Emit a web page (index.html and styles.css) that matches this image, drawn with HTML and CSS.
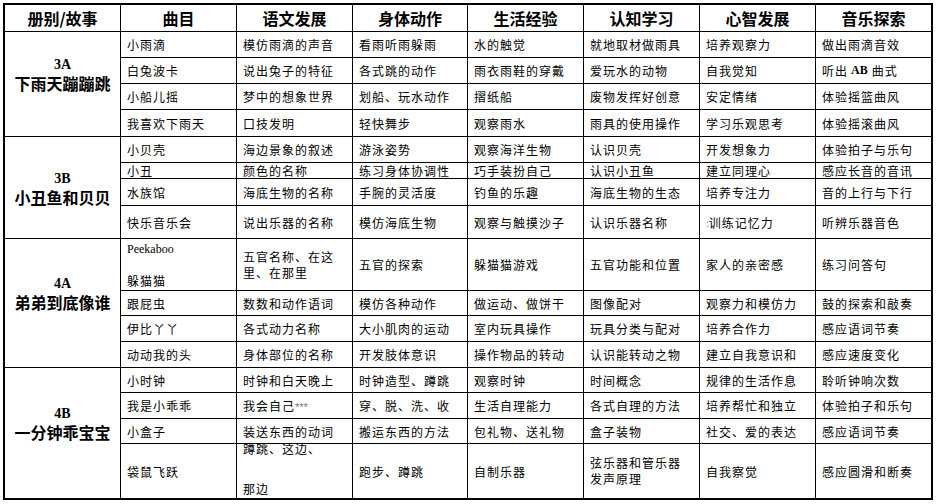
FILE: index.html
```html
<!DOCTYPE html>
<html lang="zh-CN">
<head>
<meta charset="utf-8">
<title>课程表</title>
<link rel="stylesheet" href="styles.css">
</head>
<body>
<div class="sheet">
  <div class="grid">
    <div class="hd">册别/故事</div>
    <div class="hd">曲目</div>
    <div class="hd">语文发展</div>
    <div class="hd">身体动作</div>
    <div class="hd">生活经验</div>
    <div class="hd">认知学习</div>
    <div class="hd">心智发展</div>
    <div class="hd">音乐探索</div>

    <div class="book raised"><span class="code">3A</span><span class="title">下雨天蹦蹦跳</span></div>
    <div class="c">小雨滴</div><div class="c">模仿雨滴的声音</div><div class="c">看雨听雨躲雨</div><div class="c">水的触觉</div><div class="c">就地取材做雨具</div><div class="c">培养观察力</div><div class="c">做出雨滴音效</div>
    <div class="c">白兔波卡</div><div class="c">说出兔子的特征</div><div class="c">各式跳的动作</div><div class="c">雨衣雨鞋的穿戴</div><div class="c">爱玩水的动物</div><div class="c">自我觉知</div><div class="c">听出<span class="latin spaced">AB</span>曲式</div>
    <div class="c">小船儿摇</div><div class="c">梦中的想象世界</div><div class="c">划船、玩水动作</div><div class="c">摺纸船</div><div class="c">废物发挥好创意</div><div class="c">安定情绪</div><div class="c">体验摇篮曲风</div>
    <div class="c">我喜欢下雨天</div><div class="c">口技发明</div><div class="c">轻快舞步</div><div class="c">观察雨水</div><div class="c">雨具的使用操作</div><div class="c">学习乐观思考</div><div class="c">体验摇滚曲风</div>

    <div class="book"><span class="code">3B</span><span class="title">小丑鱼和贝贝</span></div>
    <div class="c">小贝壳</div><div class="c">海边景象的叙述</div><div class="c">游泳姿势</div><div class="c">观察海洋生物</div><div class="c">认识贝壳</div><div class="c">开发想象力</div><div class="c">体验拍子与乐句</div>
    <div class="c">小丑</div><div class="c">颜色的名称</div><div class="c">练习身体协调性</div><div class="c">巧手装扮自己</div><div class="c">认识小丑鱼</div><div class="c">建立同理心</div><div class="c">感应长音的音讯</div>
    <div class="c">水族馆</div><div class="c">海底生物的名称</div><div class="c">手腕的灵活度</div><div class="c">钓鱼的乐趣</div><div class="c">海底生物的生态</div><div class="c">培养专注力</div><div class="c">音的上行与下行</div>
    <div class="c">快乐音乐会</div><div class="c">说出乐器的名称</div><div class="c">模仿海底生物</div><div class="c">观察与触摸沙子</div><div class="c">认识乐器名称</div><div class="c"><span class="faint">:</span>训练记忆力</div><div class="c">听辨乐器音色</div>

    <div class="book raised"><span class="code">4A</span><span class="title">弟弟到底像谁</span></div>
    <div class="c multi"><div><span class="latin">Peekaboo</span><br><br>躲猫猫</div></div><div class="c multi"><div>五官名称、在这<br>里、在那里</div></div><div class="c">五官的探索</div><div class="c">躲猫猫游戏</div><div class="c">五官功能和位置</div><div class="c">家人的亲密感</div><div class="c">练习问答句</div>
    <div class="c">跟屁虫</div><div class="c">数数和动作语词</div><div class="c">模仿各种动作</div><div class="c">做运动、做饼干</div><div class="c">图像配对</div><div class="c">观察力和模仿力</div><div class="c">鼓的探索和敲奏</div>
    <div class="c">伊比丫丫</div><div class="c">各式动力名称</div><div class="c">大小肌肉的运动</div><div class="c">室内玩具操作</div><div class="c">玩具分类与配对</div><div class="c">培养合作力</div><div class="c">感应语词节奏</div>
    <div class="c">动动我的头</div><div class="c">身体部位的名称</div><div class="c">开发肢体意识</div><div class="c">操作物品的转动</div><div class="c">认识能转动之物</div><div class="c">建立自我意识和</div><div class="c">感应速度变化</div>

    <div class="book raised"><span class="code">4B</span><span class="title">一分钟乖宝宝</span></div>
    <div class="c">小时钟</div><div class="c">时钟和白天晚上</div><div class="c">时钟造型、蹲跳</div><div class="c">观察时钟</div><div class="c">时间概念</div><div class="c">规律的生活作息</div><div class="c">聆听钟响次数</div>
    <div class="c">我是小乖乖</div><div class="c">我会自己<span class="stars">***</span></div><div class="c">穿、脱、洗、收</div><div class="c">生活自理能力</div><div class="c">各式自理的方法</div><div class="c">培养帮忙和独立</div><div class="c">体验拍子和乐句</div>
    <div class="c">小盒子</div><div class="c">装送东西的动词</div><div class="c">搬运东西的方法</div><div class="c">包礼物、送礼物</div><div class="c">盒子装物</div><div class="c">社交、爱的表达</div><div class="c">感应语词节奏</div>
    <div class="c">袋鼠飞跃</div><div class="c spread"><div>蹲跳、这边、<br><br>那边</div></div><div class="c">跑步、蹲跳</div><div class="c">自制乐器</div><div class="c multi"><div>弦乐器和管乐器<br>发声原理</div></div><div class="c">自我察觉</div><div class="c">感应圆滑和断奏</div>
  </div>
</div>
</body>
</html>
```

FILE: styles.css
```css
html, body {
  margin: 0;
  padding: 0;
  background: #fff;
}

.sheet {
  padding: 3px 0 0 3px;
}

.grid {
  display: grid;
  width: max-content;
  grid-template-columns: 115px 115px 115px 114px 115px 115px 115px 115px;
  grid-template-rows: 26px 25px 25px 25px 26px 25px 15px 26px 32px 51px 24px 25px 25px 24px 25px 24px 54px;
  gap: 1px;
  background: #000;
  border: 2px solid #000;
  font-family: "Noto Sans CJK SC", "Noto Sans", sans-serif;
  color: #000;
}

.grid > div {
  background: #fff;
  display: flex;
  align-items: center;
}

.hd {
  justify-content: center;
  font-size: 16px;
  font-weight: 700;
  line-height: 20px;
}

.c {
  font-size: 12px;
  letter-spacing: 1px;
  line-height: 15px;
  padding-left: 6px;
  white-space: nowrap;
}

.multi {
  line-height: 16px;
}

.spread {
  align-items: flex-start !important;
  line-height: 20px;
}

.spread > div {
  margin-top: -5px;
}

.book {
  grid-row: span 4;
  flex-direction: column;
  justify-content: center;
  text-align: center;
}

.book.raised {
  padding-bottom: 21px;
}

.code {
  font-family: "Liberation Serif", serif;
  font-weight: 700;
  font-size: 14px;
  line-height: 19px;
}

.title {
  font-size: 16px;
  font-weight: 700;
  line-height: 19px;
}

.latin {
  font-family: "Liberation Serif", serif;
  font-size: 12px;
  letter-spacing: 0;
}

.spaced {
  margin: 0 4px 0 3px;
  font-weight: 700;
}

.faint {
  color: #888;
  font-size: 10px;
  letter-spacing: 0;
}

.stars {
  font-family: "Liberation Sans", sans-serif;
  color: #777;
  font-size: 11px;
  letter-spacing: 0;
  position: relative;
  top: 2px;
}
```
